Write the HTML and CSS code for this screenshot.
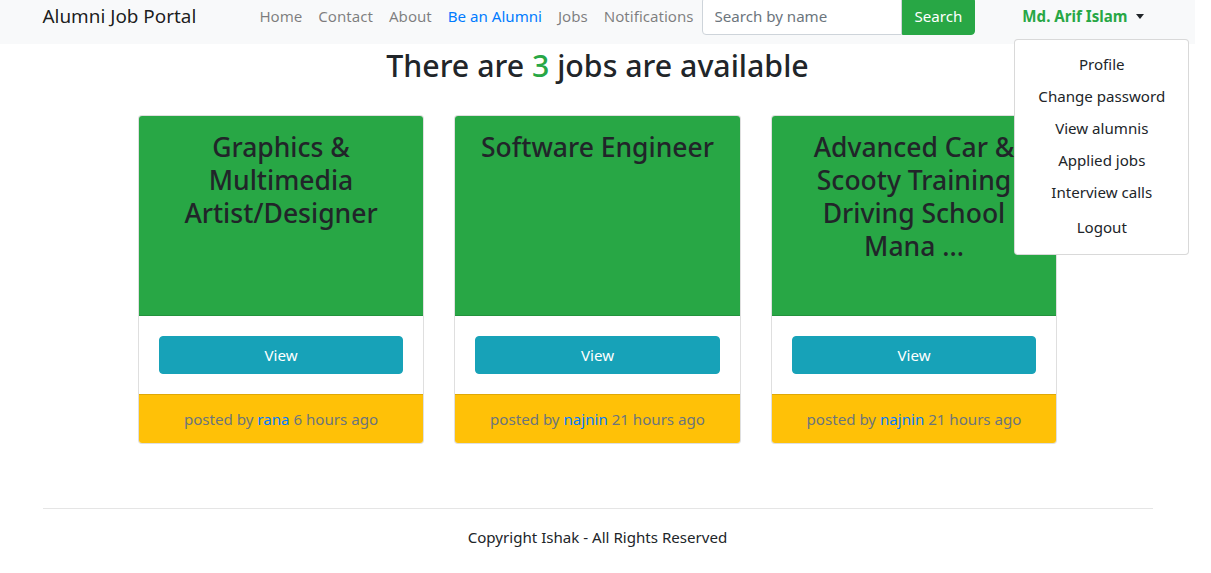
FILE: index.html
```html
<!DOCTYPE html>
<html lang="en">
<head>
<meta charset="utf-8">
<title>Alumni Job Portal</title>
<link rel="stylesheet" href="styles.css">
</head>
<body>
<div class="page">
  <nav class="navbar">
    <div class="container nav-inner">
      <a class="brand" href="#">Alumni Job Portal</a>
      <div class="nav-middle">
        <ul class="nav-links">
          <li><a class="nav-link" href="#">Home</a></li>
          <li><a class="nav-link" href="#">Contact</a></li>
          <li><a class="nav-link" href="#">About</a></li>
          <li><a class="nav-link active" href="#">Be an Alumni</a></li>
          <li><a class="nav-link" href="#">Jobs</a></li>
          <li><a class="nav-link" href="#">Notifications</a></li>
        </ul>
        <form class="search">
          <input class="search-input" type="text" placeholder="Search by name">
          <button class="search-btn" type="button">Search</button>
        </form>
      </div>
      <div class="user">
        <a class="nav-link user-link" href="#">Md. Arif Islam<span class="caret"></span></a>
        <div class="dropdown-menu">
          <a class="dropdown-item" href="#">Profile</a>
          <a class="dropdown-item" href="#">Change password</a>
          <a class="dropdown-item" href="#">View alumnis</a>
          <a class="dropdown-item" href="#">Applied jobs</a>
          <a class="dropdown-item" href="#">Interview calls</a>
          <a class="dropdown-item logout" href="#">Logout</a>
        </div>
      </div>
    </div>
  </nav>

  <main class="container">
    <h2 class="headline">There are <span class="count">3</span> jobs are available</h2>
    <div class="cards">
      <div class="card">
        <div class="card-header"><h3 class="card-title">Graphics &amp; Multimedia Artist/Designer</h3></div>
        <div class="card-body"><a class="btn-view" href="#">View</a></div>
        <div class="card-footer">posted by <a href="#">rana</a> 6 hours ago</div>
      </div>
      <div class="card">
        <div class="card-header"><h3 class="card-title">Software Engineer</h3></div>
        <div class="card-body"><a class="btn-view" href="#">View</a></div>
        <div class="card-footer">posted by <a href="#">najnin</a> 21 hours ago</div>
      </div>
      <div class="card">
        <div class="card-header"><h3 class="card-title">Advanced Car &amp; Scooty Training Driving School Mana ...</h3></div>
        <div class="card-body"><a class="btn-view" href="#">View</a></div>
        <div class="card-footer">posted by <a href="#">najnin</a> 21 hours ago</div>
      </div>
    </div>

    <footer class="footer">
      <hr class="rule">
      <p class="copyright">Copyright Ishak - All Rights Reserved</p>
    </footer>
  </main>
</div>
</body>
</html>
```

FILE: styles.css
```css
* { box-sizing: border-box; }
html, body { margin: 0; padding: 0; background: #fff; }
body {
  font-family: "Noto Sans", "Open Sans", sans-serif;
  font-size: 15.1px;
  line-height: 24px;
  color: #212529;
  overflow: hidden;
}
a { text-decoration: none; }
.page { width: 1195px; margin-top: -12px; }
.container { max-width: 1140px; margin: 0 auto; padding: 0 15px; }

.navbar { background: #f8f9fa; padding: 8px 0; }
.nav-inner { display: flex; align-items: center; }
.brand {
  font-size: 18.9px; line-height: 30px; padding: 5px 0; margin-right: 16px;
  color: rgba(0,0,0,.9); white-space: nowrap;
}
.nav-middle { display: flex; align-items: center; margin: 0 auto; }
.nav-links { display: flex; list-style: none; margin: 0; padding: 0; }
.nav-link {
  display: block; padding: 8px; line-height: 24px;
  color: rgba(0,0,0,.5); white-space: nowrap;
}
.nav-link.active { color: #007bff; }
.search { display: flex; margin: 0; }
.search-input {
  width: 200px; height: 38px; padding: 6px 12px;
  font: inherit; color: #495057;
  border: 1px solid #ced4da; border-radius: 4px 0 0 4px;
  background: #fff; outline: none;
}
.search-input::placeholder { color: #6c757d; }
.search-btn {
  height: 38px; padding: 6px 12px; font: inherit; line-height: 24px;
  color: #fff; background: #28a745; border: 1px solid #28a745;
  border-radius: 0 4px 4px 0;
}

.user { position: relative; }
.user-link { color: #28a745; font-weight: 700; }
.caret {
  display: inline-block; margin-left: 9px; vertical-align: 3px;
  border-top: 5px solid #212529; border-left: 4.5px solid transparent; border-right: 4.5px solid transparent;
}
.dropdown-menu {
  position: absolute; left: 0; top: 100%; margin-top: 3px; z-index: 10;
  min-width: 160px; padding: 8px 0;
  background: #fff; border: 1px solid rgba(0,0,0,.15); border-radius: 4px;
}
.dropdown-item {
  display: block; padding: 4px 23px; line-height: 24px;
  color: #212529; text-align: center; white-space: nowrap;
}
.dropdown-item.logout { padding: 7px 23px; }

.headline {
  margin: 3px 0 0; text-align: center;
  font-size: 30.3px; font-weight: 500; line-height: 38.4px;
}
.count { color: #28a745; }

.cards { display: flex; justify-content: center; gap: 30px; margin-top: 30px; }
.card {
  width: 286.5px; border: 1px solid rgba(0,0,0,.125); border-radius: 4px;
  background: #fff;
}
.card-header {
  height: 200px; padding: 14.5px 20px 12px; background: #28a745;
  border-bottom: 1px solid rgba(0,0,0,.125); border-radius: 3px 3px 0 0;
}
.card-title {
  margin: 0; text-align: center; font-size: 26.5px; font-weight: 500; line-height: 33.1px;
  color: #212529;
}
.card-body { padding: 20px; }
.btn-view {
  display: block; height: 38px; padding: 6px 12px; line-height: 24px;
  text-align: center; color: #fff; background: #17a2b8; border: 1px solid #17a2b8;
  border-radius: 4px;
}
.card-footer {
  padding: 12px 20px; background: #ffc107; border-top: 1px solid rgba(0,0,0,.125);
  border-radius: 0 0 3px 3px; text-align: center; color: #6c757d;
}
.card-footer a { color: #007bff; }

.footer { margin-top: 64px; }
.rule { margin: 0; border: 0; border-top: 1px solid rgba(0,0,0,.1); }
.copyright { margin: 16px 0 0; text-align: center; }
```
